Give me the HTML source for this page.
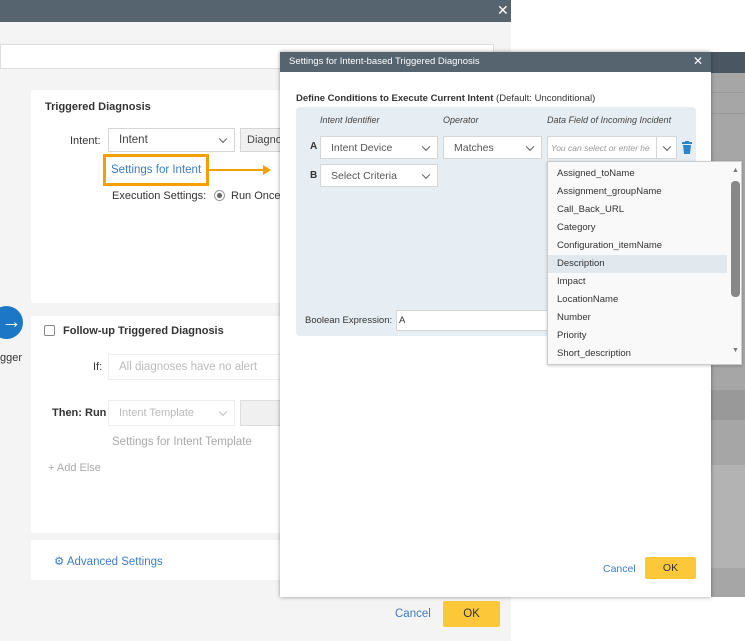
<!DOCTYPE html>
<html><head><meta charset="utf-8"><style>
*{box-sizing:border-box;margin:0;padding:0}
body{width:745px;height:641px;position:relative;overflow:hidden;background:#fff;font-family:"Liberation Sans",sans-serif;font-size:11px;color:#333}
.a{position:absolute}
.sel{position:absolute;background:#fff;border:1px solid #d6d6d6;color:#444;padding-left:10px;display:flex;align-items:center}
.chev{position:absolute;right:8px;top:50%;width:6px;height:6px;border-right:1.3px solid #555;border-bottom:1.3px solid #555;transform:translateY(-70%) rotate(45deg)}
.dd div{height:18px;line-height:18px;padding-left:9px;font-size:9.5px;color:#333}
</style></head><body>
<div class="a" style="left:0;top:0;width:511px;height:641px;background:#f4f4f4"></div>
<div class="a" style="left:0;top:0;width:511px;height:22px;background:#56646f"></div>
<div class="a" style="left:497px;top:2px;color:#fff;font-size:14px">✕</div>
<div class="a" style="left:0;top:44px;width:494px;height:25px;background:#fff;border:1px solid #ddd"></div>
<div class="a" style="left:31px;top:90px;width:260px;height:213px;background:#fff;border-radius:3px"></div>
<div class="a" style="left:45px;top:101px;font-size:11px;font-weight:bold;color:#333">Triggered Diagnosis</div>
<div class="a" style="left:70px;top:135px;font-size:11px">Intent:</div>
<div class="sel" style="left:108px;top:128px;width:127px;height:24px;font-size:11.5px">Intent<span class="chev"></span></div>
<div class="sel" style="left:240px;top:128px;width:50px;height:24px;background:#f0f0f0;padding-left:6px">Diagno</div>
<div class="a" style="left:103px;top:154px;width:106px;height:32px;border:3px solid #f59f00"></div>
<div class="a" style="left:111px;top:164px;color:#3b7dc4;font-size:11.5px">Settings for Intent</div>
<div class="a" style="left:209px;top:169px;width:58px;height:2px;background:#f59f00"></div>
<div class="a" style="left:263px;top:165px;width:0;height:0;border-left:8px solid #f59f00;border-top:5px solid transparent;border-bottom:5px solid transparent"></div>
<div class="a" style="left:112px;top:190px;font-size:11px">Execution Settings:</div>
<div class="a" style="left:214px;top:190px;width:11px;height:11px;border-radius:50%;border:1px solid #999;background:radial-gradient(#666 35%,#fff 45%)"></div>
<div class="a" style="left:231px;top:190px;font-size:11px">Run Once</div>
<div class="a" style="left:-10px;top:306px;width:33px;height:33px;border-radius:50%;background:#1d77c7;color:#fff;font-size:20px;text-align:center;line-height:32px;padding-left:10px">→</div>
<div class="a" style="left:0;top:352px;font-size:11px">gger</div>
<div class="a" style="left:31px;top:316px;width:260px;height:217px;background:#fff;border-radius:3px"></div>
<div class="a" style="left:44px;top:325px;width:11px;height:11px;border:1px solid #888;border-radius:2px"></div>
<div class="a" style="left:63px;top:325px;font-size:11px;font-weight:bold">Follow-up Triggered Diagnosis</div>
<div class="a" style="left:93px;top:361px;font-size:11px">If:</div>
<div class="sel" style="left:108px;top:354px;width:183px;height:26px;color:#bbb;font-size:11.5px;border-color:#eee">All diagnoses have no alert</div>
<div class="a" style="left:52px;top:407px;font-size:11px;font-weight:bold">Then: Run</div>
<div class="sel" style="left:108px;top:400px;width:127px;height:26px;color:#bbb;border-color:#eee">Intent Template<span class="chev" style="border-color:#bbb"></span></div>
<div class="a" style="left:240px;top:400px;width:50px;height:26px;background:#f0f0f0;border:1px solid #ddd"></div>
<div class="a" style="left:112px;top:436px;color:#aaa;font-size:11.5px">Settings for Intent Template</div>
<div class="a" style="left:48px;top:462px;color:#aaa;font-size:11px">+ Add Else</div>
<div class="a" style="left:31px;top:540px;width:260px;height:40px;background:#fff;border-radius:3px"></div>
<div class="a" style="left:54px;top:554px;color:#3b7dc4;font-size:11.5px">⚙ Advanced Settings</div>
<div class="a" style="left:395px;top:608px;color:#3b7dc4;font-size:11.5px">Cancel</div>
<div class="a" style="left:443px;top:601px;width:57px;height:26px;background:#fcc83a;border-radius:2px;text-align:center;line-height:26px;font-size:11.5px">OK</div>
<div class="a" style="left:711px;top:52px;width:34px;height:545px;background:#a6a6a6"></div>
<div class="a" style="left:711px;top:52px;width:34px;height:21px;background:#4a5762"></div>
<div class="a" style="left:711px;top:92px;width:34px;height:1px;background:#999"></div>
<div class="a" style="left:711px;top:113px;width:34px;height:1px;background:#999"></div>
<div class="a" style="left:711px;top:390px;width:34px;height:30px;background:#999"></div>
<div class="a" style="left:711px;top:465px;width:34px;height:103px;background:#b3b3b3"></div>
<div class="a" style="left:280px;top:52px;width:431px;height:545px;background:#fff;box-shadow:0 0 4px rgba(0,0,0,.4)"></div>
<div class="a" style="left:280px;top:52px;width:431px;height:20px;background:#56646f"></div>
<div class="a" style="left:289px;top:56px;color:#fff;font-size:9.5px">Settings for Intent-based Triggered Diagnosis</div>
<div class="a" style="left:693px;top:54px;color:#fff;font-size:12px">✕</div>
<div class="a" style="left:296px;top:93px;font-size:9.5px;color:#333"><b style="font-weight:bold">Define Conditions to Execute Current Intent</b> (Default: Unconditional)</div>
<div class="a" style="left:296px;top:107px;width:400px;height:229px;background:#e7eef3;border-radius:4px"></div>
<div class="a" style="left:320px;top:115px;font-size:9px;font-style:italic;color:#444">Intent Identifier</div>
<div class="a" style="left:443px;top:115px;font-size:9px;font-style:italic;color:#444">Operator</div>
<div class="a" style="left:547px;top:115px;font-size:9px;font-style:italic;color:#444">Data Field of Incoming Incident</div>
<div class="a" style="left:310px;top:141px;font-weight:bold;font-size:10px">A</div>
<div class="sel" style="left:320px;top:136px;width:118px;height:23px;font-size:10.5px;color:#555">Intent Device<span class="chev"></span></div>
<div class="sel" style="left:443px;top:136px;width:99px;height:23px;font-size:10.5px;color:#555">Matches<span class="chev"></span></div>
<div class="sel" style="left:547px;top:136px;width:130px;height:23px;font-size:8.5px;font-style:italic;color:#999;padding-left:3px;overflow:hidden;white-space:nowrap">You can select or enter he</div>
<div class="sel" style="left:656px;top:136px;width:21px;height:23px"><span class="chev" style="right:6px"></span></div>
<svg class="a" style="left:682px;top:141px" width="10" height="13" viewBox="0 0 10 13"><rect x="0" y="1" width="10" height="2" fill="#2b86c9"/><rect x="3" y="0" width="4" height="2" fill="#2b86c9"/><path d="M1 4h8l-1 9H2z" fill="#2b86c9"/></svg>
<div class="a" style="left:310px;top:170px;font-weight:bold;font-size:10px">B</div>
<div class="sel" style="left:320px;top:164px;width:118px;height:23px;font-size:10.5px;color:#555">Select Criteria<span class="chev"></span></div>
<div class="a" style="left:305px;top:315px;font-size:9.5px">Boolean Expression:</div>
<div class="a" style="left:396px;top:310px;width:160px;height:21px;background:#fff;border:1px solid #d6d6d6;font-size:9.5px;padding:4px 2px">A</div>
<div class="a" style="left:547px;top:161px;width:195px;height:204px;background:#f9f9f9;border:1px solid #ccc;box-shadow:0 1px 3px rgba(0,0,0,.2)"></div>
<div class="a dd" style="left:548px;top:165px;width:179px">
<div>Assigned_toName</div><div>Assignment_groupName</div><div>Call_Back_URL</div><div>Category</div><div>Configuration_itemName</div><div style="background:#e1e9ef">Description</div><div>Impact</div><div>LocationName</div><div>Number</div><div>Priority</div><div>Short_description</div>
</div>
<div class="a" style="left:732px;top:167px;font-size:7px;color:#777">▲</div>
<div class="a" style="left:731px;top:181px;width:9px;height:116px;background:#888;border-radius:4px"></div>
<div class="a" style="left:732px;top:347px;font-size:7px;color:#777">▼</div>
<div class="a" style="left:603px;top:563px;color:#3b7dc4;font-size:10.5px">Cancel</div>
<div class="a" style="left:645px;top:557px;width:51px;height:22px;background:#fcc83a;border-radius:2px;text-align:center;line-height:22px;font-size:10.5px">OK</div>
</body></html>
